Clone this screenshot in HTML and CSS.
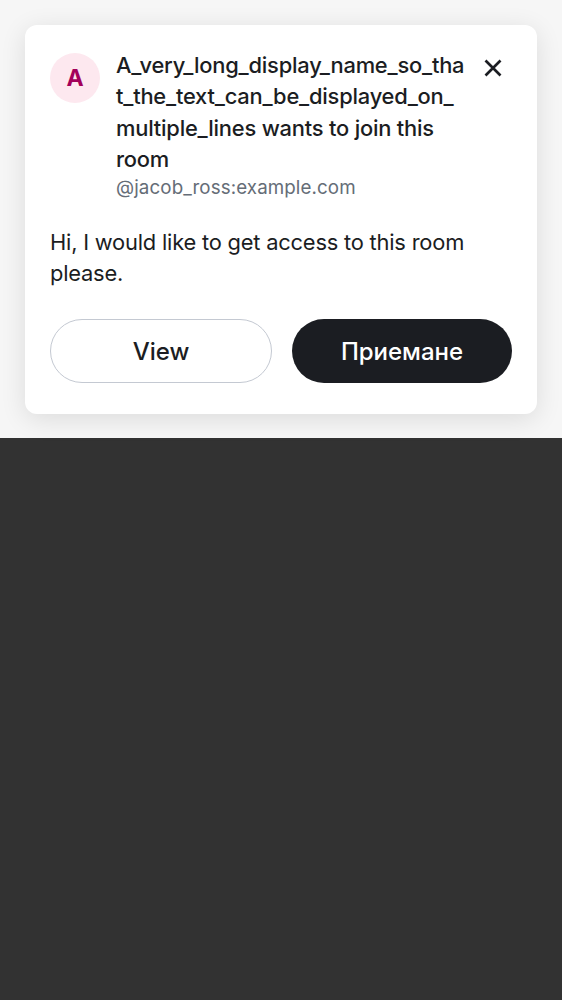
FILE: index.html
```html
<!DOCTYPE html>
<html lang="en">
<head>
<meta charset="utf-8">
<title>Join request</title>
<link rel="stylesheet" href="styles.css">
</head>
<body>
<div class="sheet">
  <div class="card">
    <div class="header">
      <div class="avatar">A</div>
      <div class="info">
        <div class="title">A_very_long_display_name_so_that_the_text_can_be_displayed_on_multiple_lines wants to join this room</div>
        <div class="userid">@jacob_ross:example.com</div>
      </div>
      <button class="close" aria-label="Close">
        <svg width="18" height="18" viewBox="0 0 18 18"><path d="M1.5 1.5 L16.5 16.5 M16.5 1.5 L1.5 16.5" stroke="#1b1d22" stroke-width="2.7" fill="none"/></svg>
      </button>
    </div>
    <p class="message">Hi, I would like to get access to this room please.</p>
    <div class="actions">
      <button class="btn btn-outline">View</button>
      <button class="btn btn-filled">Приемане</button>
    </div>
  </div>
</div>
</body>
</html>
```
FILE: styles.css
```css
* { box-sizing: border-box; }
html, body { margin: 0; padding: 0; }
body {
  background: #323232;
  font-family: Inter, "Noto Sans", sans-serif;
  color: #1b1d22;
  min-height: 1000px;
}
.sheet {
  background: #f6f6f6;
  padding: 25px;
  height: 438px;
}
.card {
  background: #ffffff;
  border-radius: 12px;
  padding: 25px 25px 31px 25px;
  box-shadow: 0 5px 26px rgba(0, 0, 0, 0.11);
}
.header {
  display: flex;
  align-items: flex-start;
}
.avatar {
  flex: 0 0 50px;
  width: 50px;
  height: 50px;
  margin-top: 3px;
  border-radius: 50%;
  background: #fde8ef;
  color: #a3005a;
  font-weight: 700;
  font-size: 23px;
  display: flex;
  align-items: center;
  justify-content: center;
}
.info {
  flex: 1;
  min-width: 0;
  margin-left: 16px;
}
.title {
  font-size: 21.875px;
  font-weight: 500;
  line-height: 31.25px;
  letter-spacing: -0.2px;
  overflow-wrap: anywhere;
}
.userid {
  font-size: 18.75px;
  line-height: 26.5px;
  color: #656d77;
  letter-spacing: 0.1px;
}
.close {
  flex: 0 0 auto;
  margin: 9px 10px 0 17px;
  padding: 0;
  border: 0;
  background: none;
  width: 18px;
  height: 18px;
  display: flex;
}
.message {
  margin: 25px 0 0 0;
  font-size: 21.875px;
  line-height: 31.25px;
  letter-spacing: -0.2px;
  color: #1b1d22;
}
.actions {
  display: flex;
  gap: 20px;
  margin-top: 30px;
}
.btn {
  flex: 1;
  height: 64px;
  border-radius: 32px;
  font-family: Inter, "Noto Sans", sans-serif;
  font-size: 24px;
  font-weight: 500;
}
.btn-outline {
  background: #ffffff;
  border: 1px solid #c4c9d2;
  color: #1b1d22;
}
.btn-filled {
  background: #1b1d22;
  border: 0;
  color: #ffffff;
}
```
